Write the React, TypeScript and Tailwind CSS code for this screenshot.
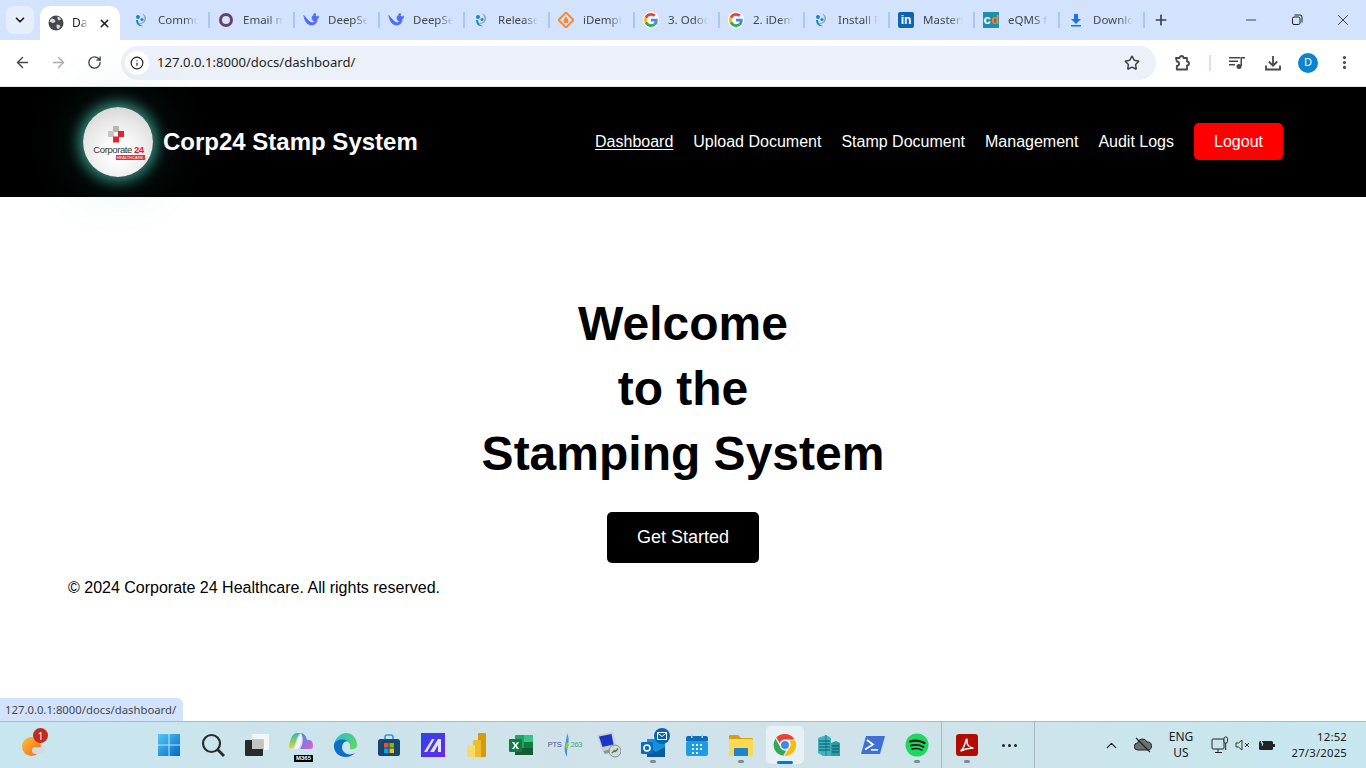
import type { ReactNode } from "react";
import {
  ArrowLeft,
  ArrowRight,
  ChevronDown,
  ChevronUp,
  Info,
  Minus,
  MoreVertical,
  Plus,
  RotateCw,
  Star,
  X,
} from "lucide-react";

const uiFont = "font-['Noto_Sans','Open_Sans',sans-serif]";

function GlobeIcon() {
  return (
    <svg width="16" height="16" viewBox="0 0 16 16">
      <circle cx="8" cy="8" r="7.500" fill="#45474a" />
      <path d="M3 3.500l3 .5 1.500 2-1 1.500-2 .5L1.500 6.500zM9.500 1.500l2.500 1 1 2-2 1-1.500-1.500zM8.500 9.500l3 .5 1 1.500-2 2.500-1.500-.5-.5-2z" fill="#d8dadd" />
    </svg>
  );
}

function SwirlIcon() {
  return (
    <svg width="16" height="16" viewBox="0 0 16 16">
      <path d="M9 1.500c4 1 5 5 3 8-2 3-6 3-7 1 2 1 5 0 6-2 1-2 0-5-2-7z" fill="#9aa5ad" />
      <path d="M3 8c0 4 3 7 7 6-3-.5-5-3-5-6z" fill="#1b87c9" />
      <circle cx="5" cy="5" r="2" fill="#1b87c9" />
      <circle cx="9" cy="7.500" r="1.500" fill="#1b87c9" />
    </svg>
  );
}

function RingIcon() {
  return (
    <svg width="16" height="16" viewBox="0 0 16 16">
      <circle cx="8" cy="8" r="5.500" fill="none" stroke="#6b3f66" strokeWidth="3" />
    </svg>
  );
}

function WhaleIcon() {
  return (
    <svg width="17" height="16" viewBox="0 0 16 16">
      <path
        d="M.8 3.500C2 9 4 13 8.500 13c3.500 0 5.500-2.500 5.500-5.500 1-1 1.500-2 1.500-3.500-1 1-2 1-3 0-1.500-1.500-3.500-.5-3.500 2 0 2.500 2 3.500 3 3.500-1 1.500-3.500 1.500-5 .5C5 8.500 3 6 .8 3.500z"
        fill="#4d6bfe"
        stroke="#4d6bfe"
        strokeWidth="0.800"
      />
      <circle cx="11.800" cy="2.500" r="1.300" fill="#4d6bfe" />
    </svg>
  );
}

function DiamondIcon() {
  return (
    <svg width="16" height="16" viewBox="0 0 16 16">
      <path d="M8 .5L15.500 8 8 15.500.5 8z" fill="none" stroke="#f58a34" strokeWidth="2" />
      <path d="M8 4.500c1.500 2 2.500 3 2.500 4.200a2.500 2.500 0 0 1-5 0C5.500 7.500 6.500 6.500 8 4.500z" fill="#f58a34" />
    </svg>
  );
}

function GoogleIcon() {
  return (
    <span className="flex h-4 w-4 items-center justify-center rounded-full bg-white">
      <svg width="14" height="14" viewBox="0 0 48 48">
        <path fill="#EA4335" d="M24 9.500c3.500 0 6.700 1.200 9.200 3.600l6.900-6.900C35.900 2.400 30.500 0 24 0 14.600 0 6.500 5.400 2.600 13.200l8 6.200C12.500 13.600 17.800 9.500 24 9.500z" />
        <path fill="#4285F4" d="M47 24.500c0-1.600-.1-3.100-.4-4.500H24v9h12.900c-.6 3-2.200 5.500-4.700 7.200l7.700 6C44.400 38.000 47 31.800 47 24.500z" />
        <path fill="#FBBC05" d="M10.500 28.600c-.5-1.400-.8-3-.8-4.600s.3-3.200.8-4.600l-8-6.200C.9 16.500 0 20.100 0 24s.9 7.500 2.600 10.800z" />
        <path fill="#34A853" d="M24 48c6.500 0 11.900-2.100 15.900-5.800l-7.700-6c-2.200 1.500-4.900 2.300-8.200 2.300-6.200 0-11.500-4.100-13.400-9.900l-8 6.200C6.500 42.600 14.600 48 24 48z" />
      </svg>
    </span>
  );
}

function LinkedInIcon() {
  return (
    <span className="flex h-4 w-4 items-center justify-center rounded-[2px] bg-[#0a66b0] text-[12px] leading-none font-bold text-white font-['Liberation_Sans',sans-serif]">
      in
    </span>
  );
}

function CdIcon() {
  return (
    <span className="flex h-4 w-4 items-center justify-center bg-[#1c8fb0] text-[13px] leading-none font-bold font-['Liberation_Sans',sans-serif]">
      <span className="text-white">c</span>
      <span className="text-[#f07d1a]">d</span>
    </span>
  );
}

function DownloadFavicon() {
  return (
    <svg width="16" height="16" viewBox="0 0 16 16">
      <path d="M6 2h4v5h3l-5 5-5-5h3z" fill="#1a73e8" />
      <rect x="3" y="13" width="10" height="1.500" fill="#1a73e8" />
    </svg>
  );
}

function Tab({ icon, label }: { icon: ReactNode; label: string }) {
  return (
    <div className="flex h-10 w-[85px] shrink-0 items-center pb-[1px]">
      <span className="ml-[8px] flex h-4 w-4 shrink-0 items-center justify-center">{icon}</span>
      <span className="ml-[9px] w-[40px] overflow-hidden whitespace-nowrap text-[11.500px] text-[#45474a] [mask-image:linear-gradient(to_right,black_65%,transparent)]">
        {label}
      </span>
      <span className="ml-auto h-4 w-[2px] shrink-0 bg-[#a8c7fa]" />
    </div>
  );
}

function TabStrip() {
  return (
    <div className={`flex h-10 items-end bg-[#d3e3fd] ${uiFont}`}>
      <button className="mb-[6px] ml-[6px] flex h-[28px] w-[28px] items-center justify-center rounded-lg bg-[#e6eefc] text-[#1f1f1f]">
        <ChevronDown size={14} strokeWidth={3} />
      </button>
      <div className="ml-[6px] flex h-[34px] w-[80px] items-center rounded-t-[10px] bg-white pl-[8px]">
        <GlobeIcon />
        <span className="ml-[8px] w-[16px] overflow-hidden whitespace-nowrap text-[12px] text-[#1f1f1f] [mask-image:linear-gradient(to_right,black_50%,transparent)]">
          Da
        </span>
        <X size={13} strokeWidth={2.800} className="ml-[10px] text-[#1f1f1f]" />
      </div>
      <div className="ml-[5px] flex">
        <Tab icon={<SwirlIcon />} label="Commu" />
        <Tab icon={<RingIcon />} label="Email m" />
        <Tab icon={<WhaleIcon />} label="DeepSe" />
        <Tab icon={<WhaleIcon />} label="DeepSe" />
        <Tab icon={<SwirlIcon />} label="Release" />
        <Tab icon={<DiamondIcon />} label="iDempi" />
        <Tab icon={<GoogleIcon />} label="3. Odoc" />
        <Tab icon={<GoogleIcon />} label="2. iDem" />
        <Tab icon={<SwirlIcon />} label="Install P" />
        <Tab icon={<LinkedInIcon />} label="Masteri" />
        <Tab icon={<CdIcon />} label="eQMS f" />
        <Tab icon={<DownloadFavicon />} label="Downlo" />
      </div>
      <div className="flex h-10 w-[31px] items-center justify-center pb-[1px] text-[#3c4043]">
        <Plus size={16} strokeWidth={2.500} />
      </div>
      <div className="ml-auto flex h-10 text-[#1f1f1f]">
        <div className="flex w-[46px] items-center justify-center">
          <Minus size={16} strokeWidth={1.200} />
        </div>
        <div className="flex w-[46px] items-center justify-center">
          <svg width="12" height="12" viewBox="0 0 12 12" fill="none" stroke="#1f1f1f">
            <rect x="1.500" y="3" width="7.500" height="7.500" rx="1.500" />
            <path d="M3.500 1h5.500a2 2 0 0 1 2 2v5.500" />
          </svg>
        </div>
        <div className="flex w-[46px] items-center justify-center">
          <X size={18} strokeWidth={1.100} />
        </div>
      </div>
    </div>
  );
}

function Toolbar() {
  return (
    <div className={`flex h-[47px] items-center border-b border-[#e3e5e8] bg-white pb-[1px] ${uiFont}`}>
      <div className="flex w-[121px] shrink-0 items-center pl-[4px] text-[#45474a]">
        <span className="flex w-9 justify-center"><ArrowLeft size={17} strokeWidth={2} /></span>
        <span className="flex w-9 justify-center text-[#a9abad]"><ArrowRight size={17} strokeWidth={2} /></span>
        <span className="flex w-9 justify-center"><RotateCw size={15} strokeWidth={2.200} /></span>
      </div>
      <div className="flex h-[34px] w-[1035px] shrink-0 items-center rounded-full bg-[#ebf0f9] pl-[4px] pr-[16px]">
        <span className="flex h-6 w-6 items-center justify-center rounded-full bg-white text-[#1f1f1f]">
          <Info size={14} strokeWidth={2} />
        </span>
        <span className="ml-[8px] pt-[1px] text-[13.100px] text-[#1f1f1f]">127.0.0.1:8000/docs/dashboard/</span>
        <Star size={16} strokeWidth={2.200} className="ml-auto text-[#3c4043]" />
      </div>
      <div className="flex flex-1 items-center text-[#45474a]">
        <span className="ml-[18px] flex w-[18px] justify-center">
          <svg width="18" height="18" viewBox="0 0 18 18" fill="none" stroke="#45474a" strokeWidth="1.800">
            <path d="M2 4h3.500a2 2 0 0 1 4 0H13v3.500a2 2 0 0 1 0 4V15.500H2.800V12a2 2 0 0 0 0-4.500z" strokeLinejoin="round" />
          </svg>
        </span>
        <span className="ml-[17px] h-4 w-[2px] bg-[#d3e3fd]" />
        <span className="ml-[17px] flex w-[18px] justify-center">
          <svg width="16" height="14" viewBox="0 0 16 14" fill="#45474a">
            <rect x="0" y="1" width="11" height="1.500" />
            <rect x="0" y="4.500" width="9" height="1.500" />
            <rect x="0" y="8" width="6" height="1.500" />
            <rect x="12" y="1" width="4" height="1.500" />
            <rect x="11.500" y="1" width="1.500" height="9" />
            <circle cx="10" cy="10.500" r="2.500" />
          </svg>
        </span>
        <span className="ml-[18px] flex w-[18px] justify-center">
          <svg width="16" height="16" viewBox="0 0 16 16" fill="none" stroke="#45474a" strokeWidth="1.800">
            <path d="M8 1v9.500M3.800 6.500L8 10.700l4.200-4.200" />
            <path d="M1 10.500v4h14v-4" />
          </svg>
        </span>
        <span className="ml-[16px] flex h-5 w-5 items-center justify-center rounded-full bg-[#0b84d0] text-[11px] text-white">D</span>
        <span className="ml-[17px] flex w-[18px] justify-center"><MoreVertical size={17} strokeWidth={2.500} /></span>
      </div>
    </div>
  );
}

function BrandLogo() {
  return (
    <div className="flex h-[70px] w-[70px] shrink-0 flex-col items-center rounded-full bg-[radial-gradient(circle_at_50%_65%,#ffffff_15%,#e6e6e6_60%,#c6c6c6_100%)] pt-[19px] shadow-[0_0_14px_4px_rgba(70,190,170,0.75),0_0_50px_12px_rgba(60,170,150,0.16)]">
      <svg width="18" height="18" viewBox="0 0 18 18" className="-ml-[5px]">
        <rect x="6" y="0" width="6" height="6" fill="#b5b5b5" />
        <rect x="1" y="5" width="6" height="6" fill="#c4c4c4" />
        <rect x="11" y="5" width="6" height="6" fill="#e0262c" />
        <rect x="6" y="10.500" width="6" height="6" fill="#e0262c" />
      </svg>
      <div className="ml-[1px] mt-[1px] flex h-[10px] items-center whitespace-nowrap text-[9.500px] leading-none tracking-[-0.4px] text-[#333] font-['Liberation_Sans',sans-serif]">
        Corporate<span className="ml-[2px] font-bold text-[#d92027]">24</span>
      </div>
      <div className="ml-[24px] h-[5px] w-[29px] overflow-hidden whitespace-nowrap bg-[#e0343a] text-center text-[4px] leading-[5px] text-white font-['Liberation_Sans',sans-serif]">
        HEALTHCARE
      </div>
    </div>
  );
}

function SiteHeader() {
  const links = ["Upload Document", "Stamp Document", "Management", "Audit Logs"];
  return (
    <header className="relative z-10 flex h-[110px] shrink-0 items-center bg-black pl-[83px] pr-[83px] text-white">
      <BrandLogo />
      <div className="ml-[10px] text-[24px] font-bold">Corp24 Stamp System</div>
      <nav className="ml-auto flex items-center text-[16px]">
        <a className="underline underline-offset-[2px]">Dashboard</a>
        {links.map((l) => (
          <a key={l} className="ml-[20px]">{l}</a>
        ))}
        <button className="mb-[2px] ml-[20px] flex h-[37px] w-[89px] items-center justify-center rounded-[5px] bg-[#ff0000] pt-[2px] text-white">
          Logout
        </button>
      </nav>
    </header>
  );
}

function Tile({ children, active, dot }: { children: ReactNode; active?: boolean; dot?: boolean }) {
  return (
    <div className={`relative mx-[3px] flex h-[38px] w-[38px] items-center justify-center rounded-[5px] ${active ? "bg-[#e6f0f5]" : ""}`}>
      {children}
      {dot && <span className="absolute bottom-[1px] left-1/2 h-[3px] w-[6px] -translate-x-1/2 rounded-full bg-[#7d8a90]" />}
      {active && <span className="absolute bottom-0 left-1/2 h-[3px] w-[16px] -translate-x-1/2 rounded-full bg-[#0078d4]" />}
    </div>
  );
}

function TaskbarIcons() {
  return (
    <>
      <Tile>
        <svg width="24" height="24" viewBox="0 0 24 24">
          <defs>
            <linearGradient id="st" x1="0" y1="0" x2="1" y2="1">
              <stop offset="0" stopColor="#52c8f8" />
              <stop offset="1" stopColor="#0069c4" />
            </linearGradient>
          </defs>
          <path d="M1 1h10.500v10.500H1zM12.500 1H23v10.500H12.500zM1 12.500h10.500V23H1zM12.500 12.500H23V23H12.500z" fill="url(#st)" />
        </svg>
      </Tile>
      <Tile>
        <svg width="24" height="24" viewBox="0 0 24 24" fill="none" stroke="#2b2b2b" strokeWidth="2.200">
          <circle cx="10.500" cy="10.500" r="8.500" />
          <path d="M16.500 16.500L23 23" strokeWidth="2.800" />
        </svg>
      </Tile>
      <Tile>
        <svg width="24" height="24" viewBox="0 0 24 24">
          <rect x="7" y="1" width="17" height="16" rx="1" fill="#f5f5f5" />
          <rect x="7" y="6" width="12" height="11" fill="#c9c9c9" />
          <rect x="0" y="7" width="18" height="16" rx="1" fill="#2a2a2a" />
          <rect x="7" y="7" width="11" height="9" fill="#c4c4c4" />
        </svg>
      </Tile>
      <Tile>
        <div className="relative flex h-6 w-6 items-center justify-center">
          <svg width="24" height="18" viewBox="0 0 24 18" className="absolute top-[-1px]">
            <defs>
              <linearGradient id="cpl" x1="0" y1="0" x2="0" y2="1">
                <stop offset="0" stopColor="#2fb8c8" />
                <stop offset="0.600" stopColor="#8fd14f" />
                <stop offset="1" stopColor="#f7c93f" />
              </linearGradient>
              <linearGradient id="cpr" x1="0" y1="0" x2="1" y2="1">
                <stop offset="0" stopColor="#3f8df0" />
                <stop offset="1" stopColor="#e25cc8" />
              </linearGradient>
            </defs>
            <path d="M0 15C1 8 3 1 8 1h4C8 3 7 10 5 15c-1 2-5 2-5 0z" fill="url(#cpl)" />
            <path d="M12 1c3 0 5 3 6 7h2c3 0 4 3 4 6 0 2-1 3-3 3H11c3-4 4-11 1-16z" fill="url(#cpr)" />
            <path d="M12 2c1 5 0 11-3 15H5c3-4 4-11 7-15z" fill="#f4f4f8" />
          </svg>
          <span className="absolute bottom-[-5px] right-0 w-[19px] bg-black text-center text-[6px] leading-[7px] font-bold text-white font-['Liberation_Sans',sans-serif]">M365</span>
        </div>
      </Tile>
      <Tile>
        <svg width="24" height="24" viewBox="0 0 24 24">
          <defs>
            <linearGradient id="ed" x1="0" y1="0" x2="1" y2="0.600">
              <stop offset="0" stopColor="#2fb8d8" />
              <stop offset="1" stopColor="#5ad66a" />
            </linearGradient>
          </defs>
          <path d="M1 11C3 4 8 0 13 0c7 0 11 6 11 12 0 4-4 5-7 4 1-5-2-9-6-9-5 0-9 2-10 4z" fill="url(#ed)" />
          <path d="M1 11c-1 7 4 13 12 13 4 0 7-2 9-4-5 3-12 1-13-5 0-5 4-8 7-6-4-4-13-3-15 2z" fill="#0c6fc6" />
        </svg>
      </Tile>
      <Tile>
        <svg width="24" height="24" viewBox="0 0 24 24">
          <path d="M8 6V4a2 2 0 0 1 2-2h4a2 2 0 0 1 2 2v2" fill="none" stroke="#2c9bd6" strokeWidth="1.600" />
          <rect x="1" y="6" width="22" height="17" rx="2.500" fill="#17466e" />
          <rect x="7" y="10" width="4.500" height="4.500" fill="#f25022" />
          <rect x="12.500" y="10" width="4.500" height="4.500" fill="#7fba00" />
          <rect x="7" y="15.500" width="4.500" height="4.500" fill="#00a4ef" />
          <rect x="12.500" y="15.500" width="4.500" height="4.500" fill="#ffb900" />
        </svg>
      </Tile>
      <Tile>
        <svg width="24" height="24" viewBox="0 0 24 24">
          <defs>
            <linearGradient id="ma" x1="0" y1="0" x2="1" y2="1">
              <stop offset="0" stopColor="#2c45e8" />
              <stop offset="1" stopColor="#6a26ef" />
            </linearGradient>
          </defs>
          <rect width="24" height="24" fill="url(#ma)" />
          <path d="M3 19L11 6h2.500L6 19zM9 19l8-13h3v13h-3v-7l-4 7z" fill="#dfe6ff" />
        </svg>
      </Tile>
      <Tile>
        <svg width="20" height="24" viewBox="0 0 20 24">
          <rect x="11" y="0" width="8" height="24" rx="1" fill="#d69a10" />
          <rect x="6" y="7" width="8" height="17" rx="1" fill="#f0bd2a" />
          <rect x="0" y="12" width="8" height="12" rx="1" fill="#fad968" />
        </svg>
      </Tile>
      <Tile>
        <svg width="24" height="24" viewBox="0 0 24 24">
          <rect x="6" y="2" width="18" height="20" rx="1" fill="#21a366" />
          <rect x="15" y="2" width="9" height="7" fill="#33c481" />
          <rect x="6" y="15" width="18" height="7" fill="#185c37" />
          <rect x="15" y="9" width="9" height="6" fill="#107c41" />
          <rect x="0" y="6" width="13" height="13" rx="1" fill="#107c41" />
          <path d="M3 9h2.200l1.400 2.500L8 9h2l-2.300 3.500L10 16H7.800l-1.300-2.300L5 16H3l2.400-3.500z" fill="#fff" />
        </svg>
      </Tile>
      <Tile>
        <div className="flex w-[26px] items-center justify-center whitespace-nowrap text-[7.500px] leading-none tracking-[-0.3px] font-['Liberation_Sans',sans-serif]">
          <span className="text-[#45509a]">PTS</span>
          <svg width="9" height="24" viewBox="0 0 7 24" className="shrink-0">
            <path d="M4 0c2 4 2 8 1 12s-1 8-1 12c-2-3-3-7-2-12S4 3 4 0z" fill="#3a9ad9" />
            <path d="M4 9l2 3-2 4-2-3z" fill="#9bc53d" />
          </svg>
          <span className="text-[#3fa57f]">263</span>
        </div>
      </Tile>
      <Tile>
        <svg width="24" height="26" viewBox="0 0 24 26">
          <path d="M0 3l16-3 3 15-14 4z" fill="#c9ced3" />
          <path d="M2 4.500l12.500-2.500 2 10.500-11 2.500z" fill="#1936c4" />
          <path d="M6 19l8-2 1 3-7 2z" fill="#8f959b" />
          <circle cx="18" cy="19" r="6" fill="#d5d8db" stroke="#777" strokeWidth="0.800" />
          <path d="M15 21l2.500-2.500 1 1 2.500-3" fill="none" stroke="#2f8f3a" strokeWidth="1.500" />
        </svg>
      </Tile>
      <Tile dot>
        <div className="relative h-6 w-6">
          <svg width="24" height="24" viewBox="0 0 24 24">
            <rect x="6" y="6" width="18" height="18" fill="#1490df" />
            <path d="M6 14l9 5 9-5v10H6z" fill="#0a5a9c" />
            <rect x="0" y="9" width="12" height="12" rx="1" fill="#0a6cbd" />
            <circle cx="6" cy="15" r="3" fill="none" stroke="#fff" strokeWidth="1.600" />
          </svg>
          <span className="absolute right-[-5px] top-[-5px] flex h-4 w-4 items-center justify-center rounded-full bg-[#0a64ad]">
            <svg width="10" height="8" viewBox="0 0 10 8" fill="none" stroke="#fff">
              <rect x="0.500" y="0.500" width="9" height="7" />
              <path d="M.5 1l4.500 3.500L9.500 1" />
            </svg>
          </span>
        </div>
      </Tile>
      <Tile>
        <svg width="24" height="24" viewBox="0 0 24 24">
          <path d="M1 5a2 2 0 0 1 2-2h18a2 2 0 0 1 2 2v3H1z" fill="#0f6cbd" />
          <rect x="1" y="8" width="22" height="15" rx="2" fill="#1d9be3" />
          <rect x="6" y="1" width="1.500" height="4" fill="#9fd5f5" />
          <rect x="16.500" y="1" width="1.500" height="4" fill="#9fd5f5" />
          <path d="M7 11h2v2H7zM11 11h2v2h-2zM15 11h2v2h-2zM7 15h2v2H7zM11 15h2v2h-2zM15 15h2v2h-2zM7 19h2v2H7zM11 19h2v2h-2z" fill="#e6f4fc" />
        </svg>
      </Tile>
      <Tile dot>
        <svg width="26" height="24" viewBox="0 0 26 24">
          <path d="M1 3a1 1 0 0 1 1-1h8l3 3h11a1 1 0 0 1 1 1v3H1z" fill="#d69f10" />
          <rect x="1" y="6" width="24" height="17" rx="1" fill="#fcd94e" />
          <path d="M7 15h12a1 1 0 0 1 1 1v7H6v-7a1 1 0 0 1 1-1z" fill="#1d83cf" />
        </svg>
      </Tile>
      <Tile active>
        <svg width="24" height="24" viewBox="0 0 48 48">
          <path d="M24 2a22 22 0 0 1 19.100 11H24a11 11 0 0 0-10.500 7.600L6.500 9.200A22 22 0 0 1 24 2z" fill="#ea4335" />
          <path d="M5 11.500L14.500 28A11 11 0 0 0 26.500 34.700L20.500 45.700A22 22 0 0 1 5 11.500z" fill="#34a853" />
          <path d="M44 14.500A22 22 0 0 1 23 46l9.800-16.500A11 11 0 0 0 32 15z" fill="#fbbc05" />
          <circle cx="24" cy="24" r="10.500" fill="#fff" />
          <circle cx="24" cy="24" r="8" fill="#4285f4" />
        </svg>
      </Tile>
      <Tile>
        <svg width="24" height="24" viewBox="0 0 24 24">
          <path d="M1 5l8-3 5 3v18H6l-5-3z" fill="#3eb3bd" />
          <path d="M9 2v21" stroke="#0f6a75" strokeWidth="0.700" />
          <path d="M2 8h11M2 11h11M2 14h11M2 17h11" stroke="#0d5560" strokeWidth="1" />
          <path d="M14 10l5-2 4 2v13h-9z" fill="#2a9aa6" />
          <path d="M15 13h7M15 16h7M15 19h7" stroke="#0d5560" strokeWidth="1" />
        </svg>
      </Tile>
      <Tile>
        <svg width="24" height="24" viewBox="0 0 24 24">
          <path d="M5 3h19l-5 18H0z" fill="#3f70d6" />
          <path d="M6 7l6 4.500-8 5" fill="none" stroke="#fff" strokeWidth="1.800" />
          <rect x="10" y="16" width="7" height="1.600" fill="#fff" />
        </svg>
      </Tile>
      <Tile dot>
        <svg width="24" height="24" viewBox="0 0 24 24" fill="none">
          <circle cx="12" cy="12" r="11.500" fill="#1ed760" />
          <path d="M5 8.500c5-1.500 10-1 14.500 1.500" stroke="#1a1a1a" strokeWidth="2.200" strokeLinecap="round" />
          <path d="M6 12.500c4-1 9-.7 12.500 1.500" stroke="#1a1a1a" strokeWidth="1.900" strokeLinecap="round" />
          <path d="M7 16c3.500-.8 7-.5 10 1" stroke="#1a1a1a" strokeWidth="1.500" strokeLinecap="round" />
        </svg>
      </Tile>
    </>
  );
}

function Taskbar() {
  return (
    <div className={`flex h-[47px] shrink-0 items-center border-t border-[#a9bac1] bg-[linear-gradient(to_right,#c8e6ee,#d0e2ea_45%,#cfe3ea_65%,#c7e7ee)] text-[#1a1a1a] ${uiFont}`}>
      <div className="relative ml-[22px] h-[22px] w-[22px] shrink-0">
        <span className="block h-[19px] w-[19px] translate-y-[3px] rounded-full bg-[linear-gradient(135deg,#fbbf3c,#f4650f)]" />
        <span className="absolute bottom-[2px] right-[-1px] h-[7px] w-[13px] rounded-full bg-[#cfdce8]" />
        <span className="absolute right-[-4px] top-[-6px] flex h-[15px] w-[15px] items-center justify-center rounded-full bg-[#c42b1c] text-[10px] leading-none text-white">1</span>
      </div>
      <div className="ml-[103px] flex shrink-0"><TaskbarIcons /></div>
      <div className="ml-[2px] h-full w-px shrink-0 bg-[#a9bac1]" />
      <div className="ml-[3px] shrink-0">
        <Tile dot>
          <span className="flex h-[22px] w-[22px] items-center justify-center rounded-[3px] bg-[#b30b00]">
            <svg width="16" height="16" viewBox="0 0 16 16" fill="none" stroke="#fff" strokeWidth="1.400">
              <path d="M1.500 14c2-1 4-5 5.500-11 .3-1.500 1.500-1 1 1-.5 3 2 7 6.500 7-4 0-9 1-13 3z" />
            </svg>
          </span>
        </Tile>
      </div>
      <div className="ml-[1px] flex w-[38px] shrink-0 justify-center gap-[3px]">
        <span className="h-[3px] w-[3px] rounded-full bg-[#222]" />
        <span className="h-[3px] w-[3px] rounded-full bg-[#222]" />
        <span className="h-[3px] w-[3px] rounded-full bg-[#222]" />
      </div>
      <div className="ml-[6px] h-full w-px shrink-0 bg-[#a9bac1]" />
      <ChevronUp size={17} strokeWidth={1.800} className="ml-[68px] shrink-0 text-[#222]" />
      <svg width="18" height="16" viewBox="0 0 18 16" className="ml-[14px] shrink-0">
        <path d="M4 13a3.500 3.500 0 0 1-.5-7A5 5 0 0 1 13 5a4 4 0 0 1 1 8z" fill="#6c7072" stroke="#222" />
        <path d="M2 1l14 14" stroke="#222" strokeWidth="1.200" />
      </svg>
      <div className="ml-[14px] w-[30px] shrink-0 text-center text-[12px] leading-[16px]">
        <div>ENG</div>
        <div>US</div>
      </div>
      <svg width="18" height="18" viewBox="0 0 18 18" fill="none" stroke="#222" className="ml-[15px] shrink-0">
        <rect x="1" y="3" width="12" height="10" rx="1" />
        <path d="M7 13v3M4 16.500h7" />
        <rect x="13" y="1" width="3.500" height="6" rx="1.500" fill="#c8e6ee" />
        <path d="M14.700 7v7" />
      </svg>
      <svg width="16" height="14" viewBox="0 0 16 14" fill="none" stroke="#333" className="ml-[6px] shrink-0">
        <path d="M1 5h2.500L7 2v10L3.500 9H1z" />
        <path d="M10 5l4 4M14 5l-4 4" />
      </svg>
      <svg width="18" height="14" viewBox="0 0 18 14" className="ml-[7px] shrink-0">
        <rect x="1" y="3" width="14" height="9" rx="1.500" fill="#222" />
        <rect x="15" y="6" width="2" height="3" fill="#222" />
        <path d="M5 0L3 5h2L4 8" stroke="#c8e6ee" fill="none" />
      </svg>
      <div className="ml-auto mr-[19px] text-right text-[11.300px] leading-[16px] tracking-[0.200px]">
        <div>12:52</div>
        <div>27/3/2025</div>
      </div>
    </div>
  );
}

export default function App() {
  return (
    <div className="relative flex h-[768px] w-[1366px] flex-col overflow-hidden bg-white font-['Liberation_Sans',Arial,sans-serif] text-black">
      <TabStrip />
      <Toolbar />
      <SiteHeader />
      <main className="flex-1">
        <div className="flex flex-col items-center pt-[94px]">
          <h1 className="text-center text-[48px] leading-[65px] font-bold">
            Welcome
            <br />
            to the
            <br />
            Stamping System
          </h1>
          <button className="mt-[26px] flex h-[51px] w-[152px] items-center justify-center rounded-[5px] bg-black text-[18px] text-white">
            Get Started
          </button>
        </div>
        <footer className="mt-[13px] pl-[68px] text-[16px] leading-[24px]">
          © 2024 Corporate 24 Healthcare. All rights reserved.
        </footer>
      </main>
      <div className={`absolute bottom-[47px] left-0 flex h-[23px] w-[183px] items-center rounded-tr-[6px] bg-[#d3e3fd] pl-[5px] pt-[1px] text-[11.300px] text-[#45474a] ${uiFont}`}>
        127.0.0.1:8000/docs/dashboard/
      </div>
      <Taskbar />
    </div>
  );
}
